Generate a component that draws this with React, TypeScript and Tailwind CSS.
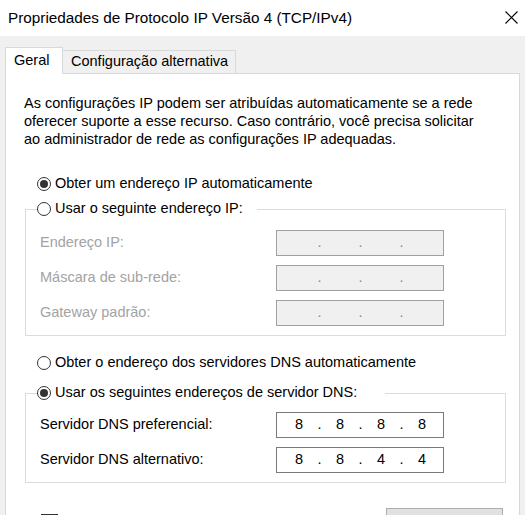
import React from 'react';

const font = { fontFamily: '"Liberation Sans", Arial, sans-serif' };

const Radio: React.FC<{ checked?: boolean; label: string }> = ({ checked, label }) => (
  <div className="flex items-center h-[18px] gap-[4px]">
    <span className="w-[14px] h-[14px] rounded-full border border-[#333333] bg-white flex items-center justify-center shrink-0">
      {checked && <span className="w-[8px] h-[8px] rounded-full bg-[#333333]" />}
    </span>
    <span className="text-[14.5px] text-[#000000] whitespace-nowrap">{label}</span>
  </div>
);

const IpBox: React.FC<{ value?: string[]; disabled?: boolean }> = ({ value, disabled }) => {
  const parts = value ?? ['', '', '', ''];
  return (
    <div
      className={`w-[168px] h-[26px] border flex items-center pl-[5px] text-[14.5px] ${
        disabled ? 'bg-[#f0f0f0] border-[#a0a0a0] text-[#8a8a8a]' : 'bg-white border-[#7a7a7a] text-[#000000]'
      }`}
    >
      {parts.map((p, i) => (
        <React.Fragment key={i}>
          <span className="w-[34px] text-center">{p}</span>
          {i < 3 && <span className="w-[7px] text-center">.</span>}
        </React.Fragment>
      ))}
    </div>
  );
};

const Row: React.FC<{ label: string; disabled?: boolean; value?: string[] }> = ({ label, disabled, value }) => (
  <div className="flex items-center h-[26px]">
    <span className={`w-[250px] pl-[14px] text-[14.5px] ${disabled ? 'text-[#a3a3a3]' : 'text-[#000000]'}`}>{label}</span>
    <IpBox disabled={disabled} value={value} />
  </div>
);

export default function App() {
  return (
    <div className="w-[525px] h-[515px] overflow-hidden bg-[#f0f0f0] flex flex-col" style={font}>
      <div className="h-[36px] bg-white flex items-center justify-between pl-[8px] pr-[7px] shrink-0">
        <span className="text-[15.3px] text-[#000000]">Propriedades de Protocolo IP Versão 4 (TCP/IPv4)</span>
        <svg width="13" height="13" viewBox="0 0 13 13" className="mt-[-2px]">
          <path d="M0.5 0.5 L12.5 12.5 M12.5 0.5 L0.5 12.5" stroke="#000" strokeWidth="1.1" />
        </svg>
      </div>

      <div className="px-[5px] pt-[11px] flex flex-col flex-1">
        <div className="flex items-end h-[26px]">
          <div className="w-[58px] h-[27px] bg-white border border-[#d9d9d9] border-b-0 flex items-center pl-[8px] text-[14.5px] text-[#000000] relative z-10 -mb-[1px]">
            Geral
          </div>
          <div className="w-[173px] h-[23px] bg-[#f0f0f0] border border-[#d9d9d9] border-l-0 border-b-0 flex items-center pl-[8px] text-[14.5px] text-[#000000]">
            Configuração alternativa
          </div>
        </div>

        <div className="flex-1 bg-white border border-[#d9d9d9] flex flex-col">
          <p className="mt-[20px] ml-[18px] text-[14.5px] leading-[18px] text-[#000000] w-[462px]">
            As configurações IP podem ser atribuídas automaticamente se a rede oferecer suporte a esse recurso. Caso
            contrário, você precisa solicitar ao administrador de rede as configurações IP adequadas.
          </p>

          <div className="mt-[27px] ml-[31px]">
            <Radio checked label="Obter um endereço IP automaticamente" />
          </div>

          <fieldset className="mt-[7px] ml-[19px] w-[481px] border border-[#dcdcdc] pt-[12px] pb-[9px] flex flex-col gap-[9px]">
            <legend className="ml-[11px] w-[220px] h-[18px] bg-white">
              <Radio label="Usar o seguinte endereço IP:" />
            </legend>
            <Row disabled label="Endereço IP:" />
            <Row disabled label="Máscara de sub-rede:" />
            <Row disabled label="Gateway padrão:" />
          </fieldset>

          <div className="mt-[18px] ml-[31px]">
            <Radio label="Obter o endereço dos servidores DNS automaticamente" />
          </div>

          <fieldset className="mt-[12px] ml-[19px] w-[481px] border border-[#dcdcdc] pt-[10px] pb-[9px] flex flex-col gap-[9px]">
            <legend className="ml-[11px] w-[348px] h-[18px] bg-white">
              <Radio checked label="Usar os seguintes endereços de servidor DNS:" />
            </legend>
            <Row label="Servidor DNS preferencial:" value={['8', '8', '8', '8']} />
            <Row label="Servidor DNS alternativo:" value={['8', '8', '4', '4']} />
          </fieldset>

          <div className="mt-[25px] flex items-start">
            <span className="ml-[35px] mt-[6px] w-[17px] h-[17px] border border-[#333333] bg-white" />
            <span className="ml-auto mr-[16px] w-[117px] h-[26px] bg-[#e1e1e1] border border-[#adadad]" />
          </div>
        </div>
      </div>
    </div>
  );
}
